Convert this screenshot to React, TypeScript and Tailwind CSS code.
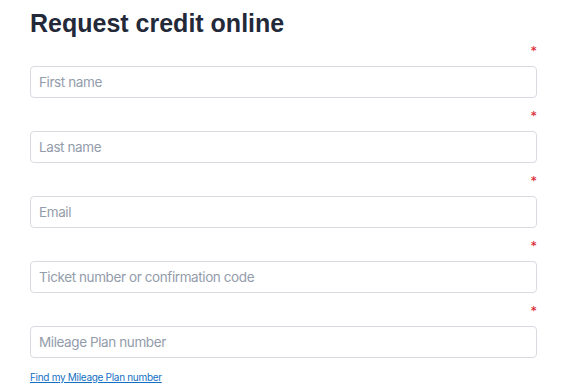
const fields = [
  { id: 'firstName', placeholder: 'First name' },
  { id: 'lastName', placeholder: 'Last name' },
  { id: 'email', placeholder: 'Email' },
  { id: 'ticket', placeholder: 'Ticket number or confirmation code' },
  { id: 'mileage', placeholder: 'Mileage Plan number' }
]

export default function App() {
  return (
    <div className="min-h-screen bg-white px-[30px] pt-[8px] font-['Inter',sans-serif]">
      <h1 className="font-['Liberation_Sans',Arial,sans-serif] text-[25px] font-bold leading-[30px] text-[#232939]">
        Request credit online
      </h1>

      <form className="mt-[6px] w-[507px]">
        {fields.map((f) => (
          <div key={f.id} className="mb-[11px]">
            <div className="flex h-[22px] items-start justify-end">
              <span className="text-[13px] leading-[14px] text-[#d9242f]">*</span>
            </div>
            <input
              id={f.id}
              type="text"
              aria-label={f.placeholder}
              placeholder={f.placeholder}
              className="h-[32px] w-full rounded-[4px] border border-[#d9dbe1] bg-white px-[8px] text-[13.5px] tracking-[-0.03em] text-[#232939] placeholder-[#939cab] outline-none"
            />
          </div>
        ))}
      </form>

      <a href="#" className="block pt-[1px] text-[10px] tracking-[-0.03em] text-[#1470c4] underline">
        Find my Mileage Plan number
      </a>
    </div>
  )
}
